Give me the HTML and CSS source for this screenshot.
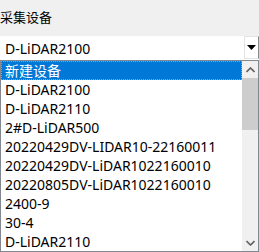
FILE: index.html
```html
<!DOCTYPE html>
<html>
<head>
<meta charset="utf-8">
<link rel="stylesheet" href="styles.css">
</head>
<body>
<div class="panel">
  <div class="label">采集设备</div>
  <div class="combo">
    <span class="combo-text">D-LiDAR2100</span>
    <span class="combo-btn"><svg width="9" height="5" viewBox="0 0 9 5"><path d="M0 0H9L4.5 5Z" fill="#000"/></svg></span>
  </div>
  <div class="list">
    <div class="items">
      <div class="item selected">新建设备</div>
      <div class="item">D-LiDAR2100</div>
      <div class="item">D-LiDAR2110</div>
      <div class="item">2#D-LiDAR500</div>
      <div class="item">20220429DV-LIDAR10-22160011</div>
      <div class="item">20220429DV-LiDAR1022160010</div>
      <div class="item">20220805DV-LiDAR1022160010</div>
      <div class="item">2400-9</div>
      <div class="item">30-4</div>
      <div class="item">D-LiDAR2110</div>
    </div>
    <div class="scrollbar">
      <div class="arrow up"><svg width="9" height="6" viewBox="0 0 9 6"><path d="M0.5 5L4.5 1L8.5 5" fill="none" stroke="#606060" stroke-width="1.6"/></svg></div>
      <div class="thumb"></div>
      <div class="track"></div>
      <div class="arrow down"><svg width="9" height="6" viewBox="0 0 9 6"><path d="M0.5 1L4.5 5L8.5 1" fill="none" stroke="#606060" stroke-width="1.6"/></svg></div>
    </div>
  </div>
</div>
</body>
</html>
```
FILE: styles.css
```css
html, body {
  margin: 0;
  padding: 0;
  background: #f0f0f0;
}
.panel {
  width: 259px;
  height: 252px;
  font-family: "Noto Sans", "Noto Sans CJK SC", sans-serif;
  font-size: 14px;
  color: #000;
  overflow: hidden;
}
.label {
  height: 36px;
  box-sizing: border-box;
  padding-top: 7px;
  line-height: 20px;
  font-size: 13px;
  font-family: "Noto Sans CJK SC", sans-serif;
}
.combo {
  height: 24px;
  background: #fff;
  display: flex;
  align-items: center;
  justify-content: space-between;
}
.combo-text {
  padding-left: 5px;
  line-height: 19px;
}
.combo-btn {
  width: 15px;
  height: 23px;
  box-sizing: border-box;
  border: 1px solid #e3e3e3;
  border-right-color: #8a8a8a;
  display: flex;
  align-items: center;
  justify-content: center;
  align-self: flex-start;
}
.list {
  height: 192px;
  box-sizing: border-box;
  border: 1px solid #828790;
  background: #fff;
  display: flex;
}
.items {
  flex: 1;
}
.item {
  height: 19px;
  line-height: 19px;
  padding-left: 4px;
  white-space: nowrap;
  box-sizing: border-box;
}
.item.selected {
  background: #0078d7;
  color: #fff;
  outline: 1px dotted #f09030;
  outline-offset: -1px;
}
.scrollbar {
  width: 16px;
  background: #f0f0f0;
  display: flex;
  flex-direction: column;
}
.arrow {
  height: 17px;
  display: flex;
  align-items: center;
  justify-content: center;
}
.thumb {
  height: 52px;
  margin: 0 0 0 0;
  background: #cdcdcd;
}
.track {
  flex: 1;
}
```
